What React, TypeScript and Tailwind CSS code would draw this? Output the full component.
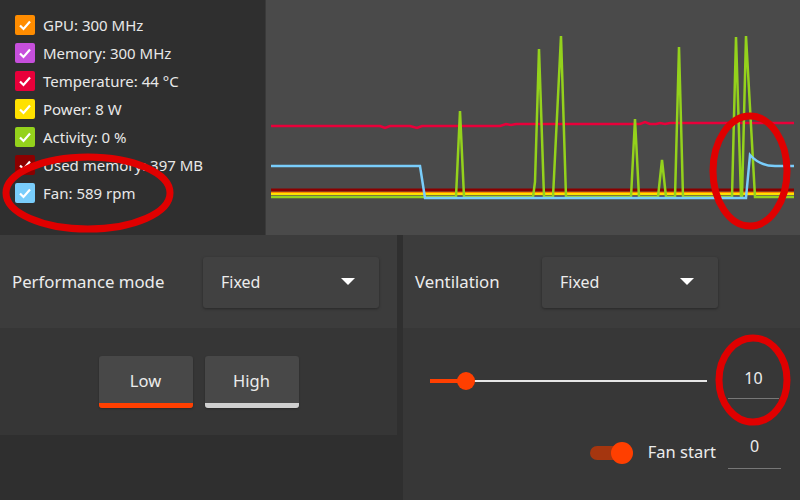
import type { ReactNode } from "react";

const legend = [
  { label: "GPU: 300 MHz", color: "bg-[#ff8c00]" },
  { label: "Memory: 300 MHz", color: "bg-[#c64fdc]" },
  { label: "Temperature: 44 °C", color: "bg-[#e8003a]" },
  { label: "Power: 8 W", color: "bg-[#ffe100]" },
  { label: "Activity: 0 %", color: "bg-[#94d21c]" },
  { label: "Used memory: 397 MB", color: "bg-[#8b0000]" },
  { label: "Fan: 589 rpm", color: "bg-[#79cdfb]" },
];

const activity =
  "271,197 456,197 460,111 464,197 533,197 535,182 539,49 544,197 553,197 561,36 566,197 631,197 635,119 639,197 658,197 662,160 666,197 675,197 679,47 683,197 732,197 736,37 741,197 742,197 746,36 755,197 794,197";
const temperature =
  "271,126 380,126 385,128 390,126 410,126 417,128 422,126 500,126 506,124 511,125 516,124 640,124 645,122 650,124 656,124 660,123 665,124 670,123 794,123";

function Check({ color, label }: { color: string; label: string }) {
  return (
    <div className="flex h-[20px] items-center gap-[8px]">
      <div className={`flex h-[20px] w-[20px] items-center justify-center rounded-[2px] ${color}`}>
        <svg width="14" height="14" viewBox="0 0 14 14">
          <path d="M2 7.5 L5.5 11 L12 3.5" fill="none" stroke="white" strokeWidth="2.2" />
        </svg>
      </div>
      <span className="text-[15px] text-[#e8e8e8]">{label}</span>
    </div>
  );
}

function Dropdown({ value }: { value: string }) {
  return (
    <div className="flex h-[51px] w-[176px] items-center justify-between rounded-[3px] bg-[#414141] pl-[18px] pr-[24px] shadow-[0_1px_3px_rgba(0,0,0,0.35)]">
      <span className="text-[16px] text-[#ececec]">{value}</span>
      <svg width="14" height="8" viewBox="0 0 14 8">
        <path d="M0 0 L14 0 L7 7 Z" fill="white" />
      </svg>
    </div>
  );
}

function Header({ label, width, children }: { label: string; width: string; children: ReactNode }) {
  return (
    <div className="flex h-[93px] items-center bg-[#3c3c3c] pl-[12px] pt-[1px]">
      <span className={`shrink-0 text-[16.8px] text-[#ececec] ${width}`}>{label}</span>
      {children}
    </div>
  );
}

function ModeButton({ label, bar }: { label: string; bar: string }) {
  return (
    <div className="flex h-[52px] w-[94px] flex-col overflow-hidden rounded-[3px] bg-[#484848] shadow-[0_1px_2px_rgba(0,0,0,0.3)]">
      <div className="flex flex-1 items-center justify-center pt-[5px] text-[16.5px] text-[#ececec]">{label}</div>
      <div className={`h-[5px] ${bar}`} />
    </div>
  );
}

export default function App() {
  return (
    <div className="relative h-[500px] w-[800px] overflow-hidden bg-[#2f2f2f] font-['Noto_Sans','Open_Sans',sans-serif]">
      <div className="flex h-[235px]">
        <div className="flex w-[265px] flex-col gap-[8px] bg-[#2f2f2f] pl-[15px] pt-[15px]">
          {legend.map((l) => (
            <Check key={l.label} {...l} />
          ))}
        </div>
        <div className="flex-1 border-l border-[#3a3a3a] bg-[#4a4a4a]">
          <svg width="534" height="235" viewBox="266 0 534 235">
            <polyline points={temperature} fill="none" stroke="#e8003a" strokeWidth="2.5" />
            <line x1="271" y1="190" x2="794" y2="190" stroke="#8b0000" strokeWidth="3" />
            <line x1="271" y1="192.5" x2="794" y2="192.5" stroke="#ff8c00" strokeWidth="1.5" />
            <line x1="271" y1="194" x2="794" y2="194" stroke="#ffe100" strokeWidth="2" />
            <line x1="271" y1="195.5" x2="794" y2="195.5" stroke="#6d5a50" strokeWidth="1" />
            <polyline points={activity} fill="none" stroke="#94d21c" strokeWidth="2.5" />
            <path
              d="M271 166 L420 166 L425 198 L746 198 L750 155 Q760 166 775 166 L794 166"
              fill="none"
              stroke="#79cdfb"
              strokeWidth="2.5"
            />
          </svg>
        </div>
      </div>

      <div className="flex h-[265px] gap-[6px]">
        <div className="flex w-[397px] flex-col">
          <Header label="Performance mode" width="w-[191px]">
            <Dropdown value="Fixed" />
          </Header>
          <div className="flex h-[107px] items-center justify-center gap-[12px] bg-[#363636]">
            <ModeButton label="Low" bar="bg-[#ff3f00]" />
            <ModeButton label="High" bar="bg-[#cfcfcf]" />
          </div>
        </div>

        <div className="flex flex-1 flex-col bg-[#373737]">
          <Header label="Ventilation" width="w-[127px]">
            <Dropdown value="Fixed" />
          </Header>
          <div className="mt-[30px] flex items-center pl-[27px] pr-[21px]">
            <div className="relative mt-[5px] h-[18px] w-[277px]">
              <div className="absolute left-0 right-0 top-[8px] h-[2px] bg-[#e6e6e6]" />
              <div className="absolute left-0 top-[7px] h-[4px] w-[36px] bg-[#ff3f00]" />
              <div className="absolute left-[27px] top-0 h-[18px] w-[18px] rounded-full bg-[#ff3f00]" />
            </div>
            <div className="ml-[21px] flex h-[41px] w-[51px] items-center justify-center border-b border-[#777777] text-[16px] text-[#ececec]">
              10
            </div>
          </div>
          <div className="mt-[28px] flex items-center justify-end pr-[19px]">
            <div className="mt-[9px] flex items-center">
              <div className="relative h-[22px] w-[43px]">
                <div className="absolute left-0 right-[4px] top-[4px] h-[14px] rounded-full bg-[#a5360f]" />
                <div className="absolute right-0 top-0 h-[22px] w-[22px] rounded-full bg-[#ff3f00]" />
              </div>
              <span className="ml-[15px] text-[16.5px] text-[#ececec]">Fan start</span>
            </div>
            <div className="ml-[12px] flex h-[42px] w-[53px] items-center justify-center border-b border-[#777777] pb-[4px] text-[16px] text-[#ececec]">
              0
            </div>
          </div>
        </div>
      </div>

      <svg className="pointer-events-none absolute left-0 top-0" width="800" height="500">
        <ellipse cx="88" cy="193" rx="82" ry="36" fill="none" stroke="#e00000" strokeWidth="7" />
        <ellipse cx="750" cy="171" rx="37" ry="55" fill="none" stroke="#e00000" strokeWidth="7" />
        <ellipse cx="753" cy="380" rx="34" ry="42" fill="none" stroke="#e00000" strokeWidth="7" />
      </svg>
    </div>
  );
}
